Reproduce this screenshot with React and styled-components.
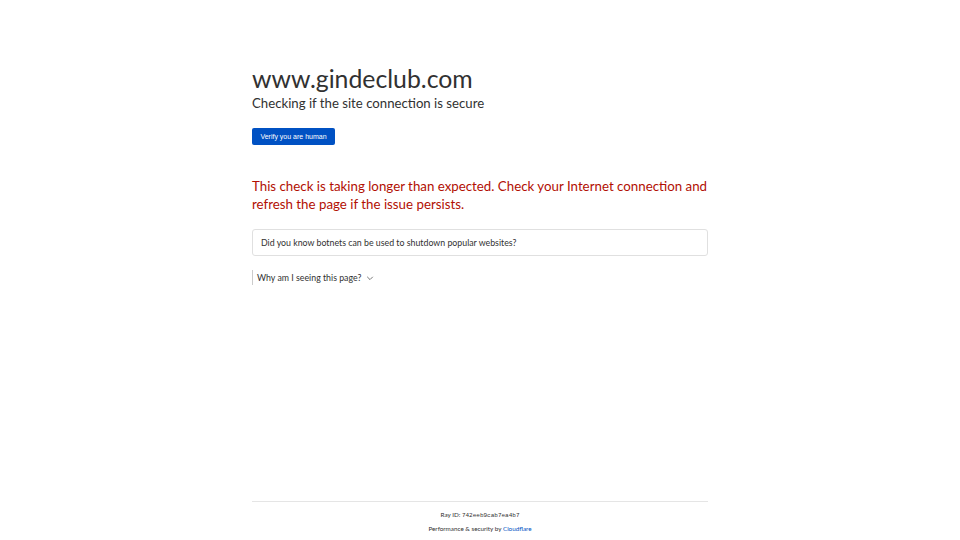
import React from "react";
import styled, { createGlobalStyle } from "styled-components";

const GlobalStyle = createGlobalStyle`
  html, body {
    margin: 0;
    padding: 0;
    background: #fff;
  }
  body {
    font-family: Lato, "Noto Sans", sans-serif;
    color: #313131;
  }
`;

const Page = styled.div`
  width: 960px;
  height: 540px;
  display: flex;
  flex-direction: column;
  align-items: center;
`;

const Main = styled.main`
  width: 456px;
  flex: 1;
  padding-top: 64px;
`;

const Title = styled.h1`
  margin: 0;
  font-size: 24.8px;
  font-weight: 400;
  line-height: 30px;
  color: #313131;
`;

const Subtitle = styled.h2`
  margin: 0;
  font-size: 13.2px;
  font-weight: 400;
  line-height: 18px;
  color: #313131;
`;

const VerifyButton = styled.button`
  margin-top: 16px;
  background: #0051c3;
  color: #fff;
  border: none;
  border-radius: 2px;
  height: 17px;
  width: 83px;
  padding: 0;
  font-family: "Liberation Sans", Arial, sans-serif;
  font-size: 7px;
  cursor: pointer;
`;

const Warning = styled.p`
  margin: 32px 0 0;
  font-size: 13.3px;
  line-height: 18px;
  color: #b20f03;
`;

const Tip = styled.div`
  margin-top: 16px;
  border: 1px solid #e0e0e0;
  border-radius: 3px;
  height: 25px;
  display: flex;
  align-items: center;
  padding: 0 8px;
  font-size: 8.8px;
  color: #313131;
`;

const Why = styled.button`
  margin-top: 14px;
  display: flex;
  align-items: center;
  gap: 5px;
  background: none;
  border: none;
  border-left: 1px solid #ccc;
  padding: 2px 0 2px 4px;
  font-family: inherit;
  font-size: 8.8px;
  color: #313131;
  cursor: pointer;
`;

const Footer = styled.footer`
  width: 456px;
  border-top: 1px solid #e5e5e5;
  padding: 9px 0 8px;
  display: flex;
  flex-direction: column;
  align-items: center;
  gap: 6px;
  font-size: 6.3px;
  color: #313131;
`;

const Ray = styled.code`
  font-family: "Liberation Mono", monospace;
  font-size: 6px;
`;

const Link = styled.a`
  color: #0051c3;
  text-decoration: none;
`;

const App = () => (
  <Page>
    <GlobalStyle />
    <Main>
      <Title>www.gindeclub.com</Title>
      <Subtitle>Checking if the site connection is secure</Subtitle>
      <VerifyButton>Verify you are human</VerifyButton>
      <Warning>
        This check is taking longer than expected. Check your Internet connection and refresh
        the page if the issue persists.
      </Warning>
      <Tip>Did you know botnets can be used to shutdown popular websites?</Tip>
      <Why>
        Why am I seeing this page?
        <svg width="8" height="8" viewBox="0 0 10 10" fill="none" stroke="#555" strokeWidth="1">
          <path d="M1.5 3.5 L5 7 L8.5 3.5" />
        </svg>
      </Why>
    </Main>
    <Footer>
      <div>
        Ray ID: <Ray>742eeb9cab7ea4b7</Ray>
      </div>
      <div>
        Performance &amp; security by <Link href="#">Cloudflare</Link>
      </div>
    </Footer>
  </Page>
);

export default App;
